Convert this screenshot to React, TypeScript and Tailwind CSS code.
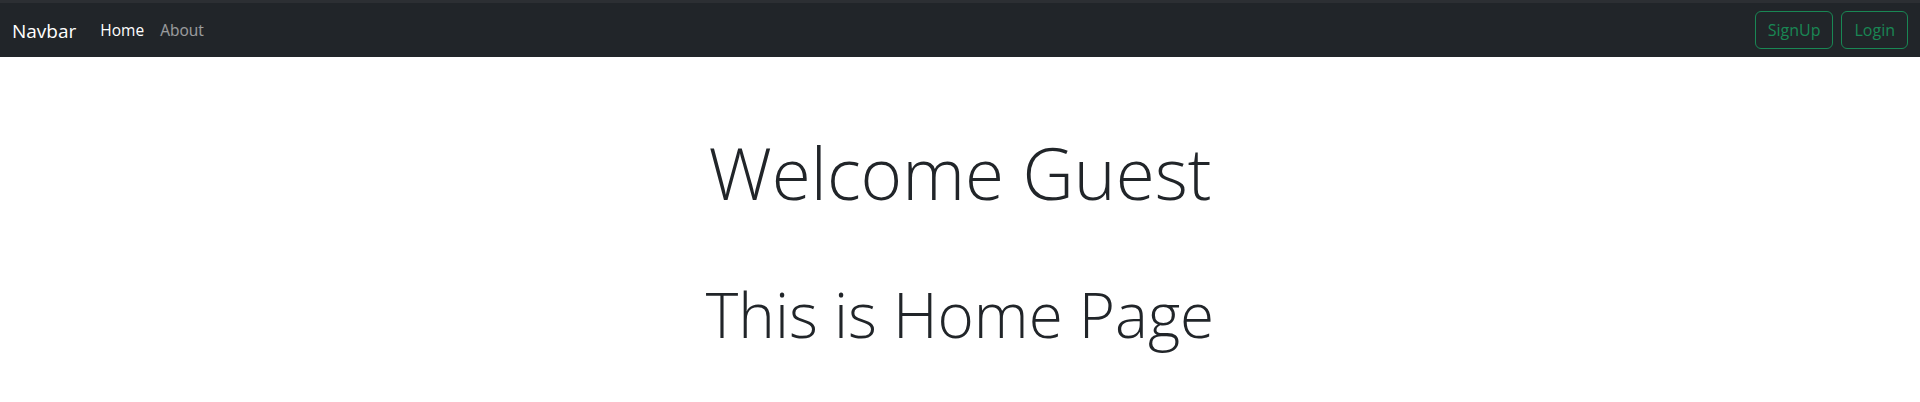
import React from "react";

const font = { fontFamily: '"Open Sans", "Noto Sans", sans-serif' };

function Navbar() {
  return (
    <nav className="border-t-[3px] border-[#2c2f33] bg-[#212529]">
      <div className="flex h-[54px] items-center justify-between px-3">
        <div className="flex items-center pt-px">
          <a href="#" className="mr-4 text-[19px] leading-[30px] text-white">
            Navbar
          </a>
          <ul className="flex items-center text-[15.5px]">
            <li>
              <a href="#" className="block px-2 py-2 text-white">Home</a>
            </li>
            <li>
              <a href="#" className="block px-2 py-2 text-white/55">About</a>
            </li>
          </ul>
        </div>
        <div className="flex items-center gap-2">
          <button className="h-[38px] rounded-[6px] border border-[#198754] px-3 text-[16px] text-[#198754]">
            SignUp
          </button>
          <button className="h-[38px] rounded-[6px] border border-[#198754] px-3 text-[16px] text-[#198754]">
            Login
          </button>
        </div>
      </div>
    </nav>
  );
}

export default function App() {
  return (
    <div className="min-h-screen bg-white text-[#212529]" style={font}>
      <Navbar />
      <div className="flex flex-col items-center pt-[73px]">
        <h1 className="text-[71px] font-light leading-[1.2]">Welcome Guest</h1>
        <h2 className="mt-[62px] text-[62px] font-light leading-[1.2]">This is Home Page</h2>
      </div>
    </div>
  );
}
